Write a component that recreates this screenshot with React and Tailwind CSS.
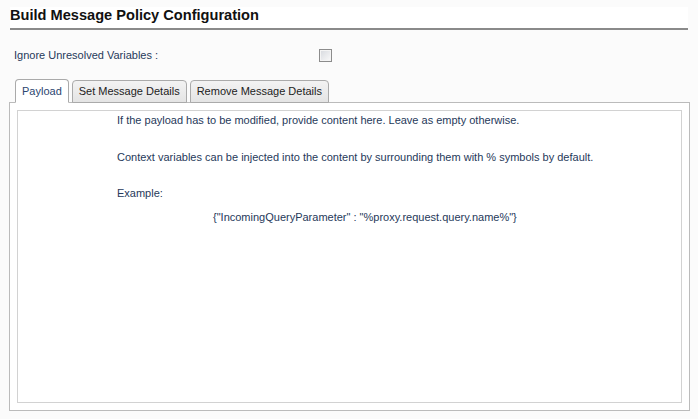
export default function App() {
  const tabs = ["Payload", "Set Message Details", "Remove Message Details"];
  const active = 0;

  return (
    <div className="min-h-[419px] bg-[#fbfbfb] font-['Liberation_Sans',Arial,sans-serif] pt-[7px]">
      <div className="ml-[10px] w-[678px] border-b-2 border-[#8a8a8a] pb-[5px] bg-white">
        <h1 className="text-[14.6px] font-bold leading-[16px] text-[#111]">
          Build Message Policy Configuration
        </h1>
      </div>

      <div className="flex items-center ml-[14px] mt-[18px] h-[14px]">
        <span className="w-[305px] text-[11px] text-[#26395a]">Ignore Unresolved Variables :</span>
        <span className="w-[13px] h-[13px] border border-[#8c8c8c] bg-gradient-to-br from-[#d6d9de] to-[#fafafa] shadow-[inset_0_0_0_1px_#f4f4f4]"></span>
      </div>

      <div className="relative z-10 flex items-end gap-[3px] ml-[15px] mt-[17px] -mb-px">
        {tabs.map((t, i) => (
          <div
            key={t}
            className={
              i === active
                ? "h-[24px] px-[6px] flex items-center border border-[#aaa] border-b-white rounded-t-[4px] bg-white text-[11px] text-[#2b4670]"
                : "h-[23px] px-[6px] flex items-center border border-[#aaa] rounded-t-[4px] bg-gradient-to-b from-[#f3f3f3] to-[#e4e4e4] text-[11px] text-[#222]"
            }
          >
            {t}
          </div>
        ))}
      </div>

      <div className="ml-[9px] w-[681px] h-[309px] border border-[#bbb] bg-white p-[7px]">
        <div className="h-full border border-[#d2d2d2] pl-[99px] pt-[3px] text-[11px] text-[#26395a] leading-[13px]">
          <p>If the payload has to be modified, provide content here. Leave as empty otherwise.</p>
          <p className="mt-[24px]">Context variables can be injected into the content by surrounding them with % symbols by default.</p>
          <p className="mt-[23px]">Example:</p>
          <p className="mt-[11px] ml-[96px]">{'{"IncomingQueryParameter" : "%proxy.request.query.name%"}'}</p>
        </div>
      </div>
    </div>
  );
}
